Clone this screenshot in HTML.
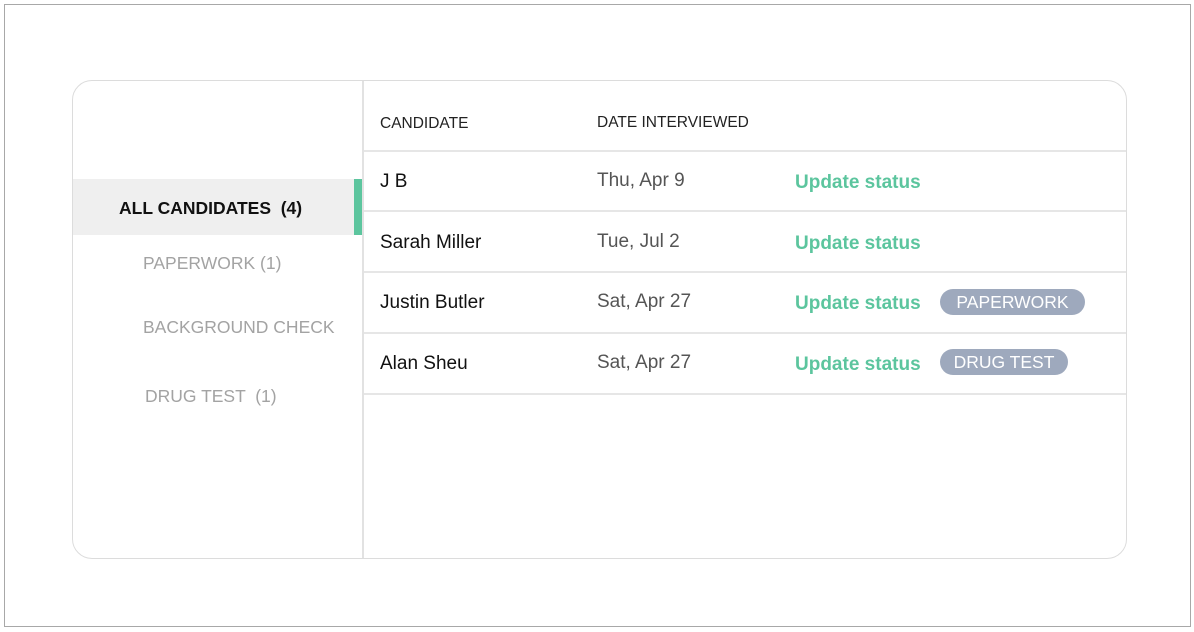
<!DOCTYPE html>
<html><head><style>
*{margin:0;padding:0;box-sizing:border-box}
body{width:1194px;height:632px;background:#fff;font-family:"Liberation Sans",sans-serif;position:relative;overflow:hidden}
.frame{position:absolute;left:4px;top:4px;width:1187px;height:623px;border:1px solid #a8a8a8}
.card{position:absolute;left:72px;top:80px;width:1055px;height:479px;border:1px solid #dcdcdc;border-radius:20px;overflow:hidden}
.div{position:absolute;left:289px;top:0;width:2px;height:100%;background:#e2e2e2}
.t{position:absolute;white-space:nowrap}
.act{position:absolute;left:0;top:98px;width:281px;height:56px;background:#efefef}
.bar{position:absolute;left:281px;top:98px;width:8px;height:56px;background:#5cc59e}
.nav{color:#a3a3a3;font-size:17.5px}
.hd{font-size:15.5px;color:#222}
.nm{font-size:19px;color:#111}
.dt{font-size:19px;color:#555}
.up{font-size:19px;color:#5cc59e;font-weight:bold}
.line{position:absolute;left:291px;width:764px;height:2px;background:#e6e6e6}
.pill{position:absolute;height:26px;border-radius:13px;background:#9ea9bd;color:#fff;font-size:17.5px;line-height:26px;text-align:center}
</style></head><body>
<div class="frame"></div>
<div class="card">
<div class="act"></div><div class="bar"></div>
<div class="div"></div>
<div class="t" style="left:46px;top:117px;font-size:17.5px;font-weight:bold;color:#111">ALL CANDIDATES &nbsp;(4)</div>
<div class="t nav" style="left:70px;top:172px">PAPERWORK (1)</div>
<div class="t nav" style="left:70px;top:236px">BACKGROUND CHECK</div>
<div class="t nav" style="left:72px;top:305px">DRUG TEST &nbsp;(1)</div>
<div class="t hd" style="left:307px;top:34px">CANDIDATE</div>
<div class="t hd" style="left:524px;top:33px">DATE INTERVIEWED</div>
<div class="line" style="top:69px"></div>
<div class="line" style="top:129px"></div>
<div class="line" style="top:190px"></div>
<div class="line" style="top:251px"></div>
<div class="line" style="top:312px"></div>
<div class="t nm" style="left:307px;top:90px">J B</div>
<div class="t nm" style="left:307px;top:151px">Sarah Miller</div>
<div class="t nm" style="left:307px;top:211px">Justin Butler</div>
<div class="t nm" style="left:307px;top:272px">Alan Sheu</div>
<div class="t dt" style="left:524px;top:89px">Thu, Apr 9</div>
<div class="t dt" style="left:524px;top:150px">Tue, Jul 2</div>
<div class="t dt" style="left:524px;top:210px">Sat, Apr 27</div>
<div class="t dt" style="left:524px;top:271px">Sat, Apr 27</div>
<div class="t up" style="left:722px;top:91px">Update status</div>
<div class="t up" style="left:722px;top:152px">Update status</div>
<div class="t up" style="left:722px;top:212px">Update status</div>
<div class="t up" style="left:722px;top:273px">Update status</div>
<div class="pill" style="left:867px;top:208px;width:145px">PAPERWORK</div>
<div class="pill" style="left:867px;top:268px;width:128px">DRUG TEST</div>
</div>
</body></html>
